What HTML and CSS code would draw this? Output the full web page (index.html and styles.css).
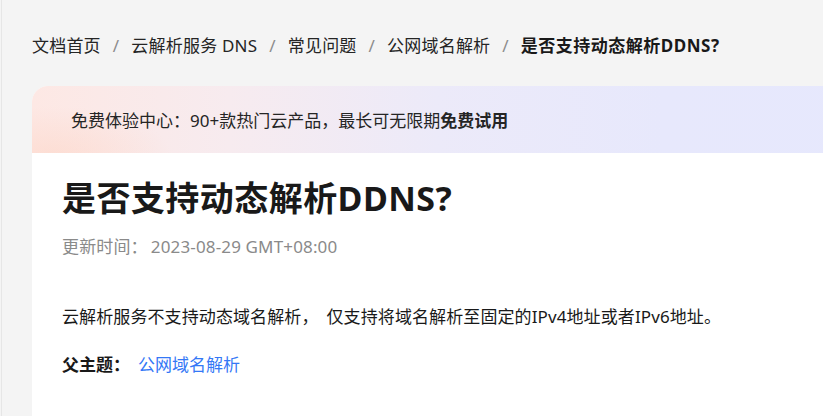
FILE: index.html
```html
<!DOCTYPE html>
<html lang="zh-CN">
<head>
<meta charset="utf-8">
<title>是否支持动态解析DDNS?</title>
<link rel="stylesheet" href="styles.css">
</head>
<body>
<div class="page">
  <nav class="crumbs">
    <a class="crumb">文档首页</a><span class="sep">/</span>
    <a class="crumb">云解析服务 DNS</a><span class="sep">/</span>
    <a class="crumb">常见问题</a><span class="sep">/</span>
    <a class="crumb">公网域名解析</a><span class="sep">/</span>
    <span class="crumb current">是否支持动态解析DDNS?</span>
  </nav>
  <div class="card">
    <div class="banner">
      <span>免费体验中心：90+款热门云产品，最长可无限期<b>免费试用</b></span>
    </div>
    <div class="content">
      <h1 class="title">是否支持动态解析DDNS?</h1>
      <div class="date">更新时间<span class="colon">：</span>2023-08-29 GMT+08:00</div>
      <p class="body-text">云解析服务不支持动态域名解析<span class="comma">，</span>仅支持将域名解析至固定的IPv4地址或者IPv6地址。</p>
      <div class="parent"><b>父主题：</b><a class="link">公网域名解析</a></div>
    </div>
  </div>
</div>
</body>
</html>
```
FILE: styles.css
```css
html, body {
  margin: 0;
  padding: 0;
}
body {
  width: 823px;
  height: 416px;
  overflow: hidden;
  background: #f4f4f4;
  font-family: "Noto Sans", "Noto Sans CJK SC", sans-serif;
  color: #191919;
}
.page {
  margin-left: 1px;
  border-left: 1px solid #e6e6e6;
  padding-left: 30px;
  height: 416px;
  overflow: hidden;
}
.crumbs {
  padding-top: 34px;
  display: flex;
  align-items: center;
  font-size: 17px;
  line-height: 24px;
  letter-spacing: 0.2px;
  white-space: nowrap;
}
.crumb {
  color: #252525;
}
.crumb.current {
  font-weight: 700;
  color: #191919;
  letter-spacing: 0.5px;
}
.sep {
  color: #8c8c8c;
  margin: 0 12px;
}
.card {
  margin-top: 28px;
  width: 900px;
  background: #fff;
  border-radius: 16px 16px 0 0;
  overflow: hidden;
}
.banner {
  height: 67px;
  display: flex;
  align-items: center;
  padding-left: 39px;
  font-size: 17px;
  color: #252525;
  background:
    radial-gradient(ellipse 120px 50px at 20px 70px, rgba(253, 214, 200, 0.6), rgba(253, 214, 200, 0) 100%),
    linear-gradient(90deg, #fde8e4 0%, #f7ebef 22%, #eceaf9 45%, #e7e8fc 70%, #e6e8fd 100%);
}
.banner b {
  font-weight: 700;
}
.content {
  padding: 22px 0 40px 30px;
}
.title {
  margin: 0;
  font-size: 34px;
  line-height: 46px;
  font-weight: 700;
  letter-spacing: 0.45px;
  color: #191919;
}
.date {
  margin-top: 14px;
  font-size: 17px;
  line-height: 24px;
  letter-spacing: 0.15px;
  color: #8a8a8a;
}
.colon {
  margin-right: 3px;
}
.body-text {
  margin: 46px 0 0;
  font-size: 17px;
  line-height: 24px;
  letter-spacing: 0.1px;
  color: #191919;
}
.comma {
  margin-right: 8px;
}
.parent {
  margin-top: 24px;
  font-size: 17px;
  line-height: 24px;
}
.parent b {
  font-weight: 700;
  margin-right: 8px;
}
.link {
  color: #3478f6;
}
```
